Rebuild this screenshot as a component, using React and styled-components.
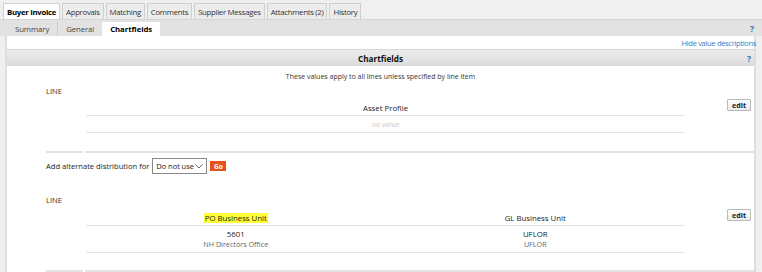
import React from "react";
import styled, { createGlobalStyle } from "styled-components";

const GlobalStyle = createGlobalStyle`
  body {
    margin: 0;
    background: #f0f0f0;
    font-family: "Open Sans", "Noto Sans", sans-serif;
    color: #222;
  }
`;

const topTabs = [
  "Buyer Invoice",
  "Approvals",
  "Matching",
  "Comments",
  "Supplier Messages",
  "Attachments (2)",
  "History",
];

const subTabs = ["Summary", "General", "Chartfields"];

const Page = styled.div`
  width: 762px;
  height: 272px;
  overflow: hidden;
  padding-top: 3px;
  box-sizing: border-box;
`;

const TabBar = styled.div`
  display: flex;
  gap: 2px;
  padding-left: 3px;
  height: 16px;
`;

const Tab = styled.div`
  display: flex;
  align-items: center;
  padding: 0 3px;
  font-size: 7.8px;
  letter-spacing: -0.3px;
  font-weight: ${(p) => (p.$active ? 700 : 400)};
  background: ${(p) => (p.$active ? "#fff" : "#ececec")};
  border: 1px solid #cfcfcf;
  border-bottom: none;
  color: ${(p) => (p.$active ? "#000" : "#333")};
`;

const SubBar = styled.div`
  display: flex;
  align-items: flex-end;
  height: 17px;
  background: #e2e2e2;
  border-top: 1px solid #d4d4d4;
  padding-left: 7px;
  box-sizing: border-box;
`;

const SubTab = styled.div`
  display: flex;
  align-items: center;
  height: 14px;
  padding: 0 8px;
  font-size: 7.8px;
  letter-spacing: -0.1px;
  font-weight: ${(p) => (p.$active ? 700 : 400)};
  background: ${(p) => (p.$active ? "#fff" : "transparent")};
  color: ${(p) => (p.$active ? "#000" : "#444")};
  border-right: ${(p) => (p.$sep ? "1px solid #cfcfcf" : "none")};
`;

const Help = styled.span`
  margin-left: auto;
  margin-right: 8px;
  align-self: center;
  color: #2a6fbd;
  font-weight: 700;
  font-size: 8.5px;
`;

const Content = styled.div`
  margin: 0 6px 0 5px;
  background: #fff;
  border-left: 2px solid #dedede;
  border-right: 2px solid #dedede;
  height: 240px;
`;

const LinkRow = styled.div`
  height: 14px;
  display: flex;
  justify-content: flex-end;
  align-items: flex-end;
  padding-bottom: 1px;
  box-sizing: border-box;
  border-bottom: 1px solid #d6d6d6;
`;

const Link = styled.a`
  color: #3a7dc9;
  font-size: 7.6px;
  letter-spacing: -0.35px;
  text-decoration: none;
  margin-right: -2px;
`;

const PanelHeader = styled.div`
  position: relative;
  height: 16px;
  display: flex;
  align-items: center;
  justify-content: center;
  background: linear-gradient(#ededed, #dadada);
  font-size: 8.2px;
  font-weight: 700;
  color: #111;
`;

const HeaderHelp = styled.span`
  position: absolute;
  right: 3px;
  color: #2a6fbd;
  font-weight: 700;
  font-size: 8.5px;
`;

const Note = styled.div`
  text-align: center;
  font-size: 7px;
  color: #333;
  padding-top: 6px;
  height: 12px;
`;

const Section = styled.div`
  padding-left: 39px;
`;

const LineLabel = styled.div`
  font-size: 7.6px;
  color: #333;
  height: ${(p) => p.$h}px;
  margin-top: ${(p) => p.$mt || 0}px;
  line-height: 11px;
`;

const Row = styled.div`
  display: flex;
  align-items: flex-start;
`;

const Grid = styled.div`
  margin-left: 40px;
  width: 599px;
  display: grid;
  grid-template-columns: repeat(${(p) => p.$cols}, 1fr);
`;

const HeadCell = styled.div`
  height: 15px;
  display: flex;
  align-items: center;
  justify-content: center;
  font-size: 7.8px;
  color: #222;
  border-bottom: 1px solid #dfe5ec;
`;

const Mark = styled.span`
  background: #ffff33;
  padding: 0 1px;
`;

const ValueCell = styled.div`
  height: ${(p) => p.$h}px;
  display: flex;
  flex-direction: column;
  align-items: center;
  justify-content: center;
  border-bottom: 1px solid #dfe5ec;
`;

const Value = styled.div`
  font-size: 7.8px;
  color: #222;
  line-height: 10px;
`;

const Desc = styled.div`
  font-size: 7.2px;
  color: #666;
  line-height: 10px;
`;

const Empty = styled.div`
  font-size: 7.4px;
  font-style: italic;
  color: #c9c9c9;
`;

const EditButton = styled.button`
  margin-left: auto;
  margin-right: 3px;
  margin-top: -1px;
  width: 24px;
  height: 12px;
  padding: 0;
  font-family: inherit;
  font-size: 7.2px;
  font-weight: 700;
  color: #222;
  background: linear-gradient(#fdfdfd, #ececec);
  border: 1px solid #b9b9b9;
  border-radius: 1px;
`;

const Divider = styled.div`
  display: flex;
  gap: 2px;
  margin-top: ${(p) => p.$top}px;
  & > span {
    height: 2px;
    background: #e3e3e3;
  }
  & > span:first-child {
    width: 37px;
  }
  & > span:last-child {
    flex: 1;
  }
`;

const AltRow = styled.div`
  display: flex;
  align-items: center;
  gap: 3px;
  height: 16px;
  margin-top: 5px;
  font-size: 7.6px;
  color: #222;
  white-space: nowrap;
`;

const Select = styled.div`
  display: flex;
  align-items: center;
  justify-content: space-between;
  width: 55px;
  height: 16px;
  box-sizing: border-box;
  border: 1px solid #8a8a8a;
  padding: 0 3px 0 3px;
  font-size: 7.6px;
  letter-spacing: -0.1px;
  background: #fff;
`;

const GoButton = styled.div`
  width: 16px;
  height: 10px;
  display: flex;
  align-items: center;
  justify-content: center;
  background: #e6501c;
  color: #fff;
  font-size: 6.6px;
  font-weight: 700;
`;

export default function App() {
  return (
    <Page>
      <GlobalStyle />
      <TabBar>
        {topTabs.map((t, i) => (
          <Tab key={t} $active={i === 0}>
            {t}
          </Tab>
        ))}
      </TabBar>
      <SubBar>
        {subTabs.map((t, i) => (
          <SubTab key={t} $active={i === 2} $sep={i === 0}>
            {t}
          </SubTab>
        ))}
        <Help>?</Help>
      </SubBar>
      <Content>
        <LinkRow>
          <Link>Hide value descriptions</Link>
        </LinkRow>
        <PanelHeader>
          Chartfields
          <HeaderHelp>?</HeaderHelp>
        </PanelHeader>
        <Note>These values apply to all lines unless specified by line item</Note>
        <Section>
          <LineLabel $h={14} $mt={2}>LINE</LineLabel>
          <Row>
            <Grid $cols={1}>
              <HeadCell>Asset Profile</HeadCell>
              <ValueCell $h={16}>
                <Empty>no value</Empty>
              </ValueCell>
            </Grid>
            <EditButton>edit</EditButton>
          </Row>
          <Divider $top={18}>
            <span />
            <span />
          </Divider>
          <AltRow>
            Add alternate distribution for
            <Select>
              Do not use
              <svg width="8" height="5" viewBox="0 0 8 5">
                <path d="M0.5 0.5 L4 4 L7.5 0.5" fill="none" stroke="#555" strokeWidth="0.9" />
              </svg>
            </Select>
            <GoButton>Go</GoButton>
          </AltRow>
          <LineLabel $h={15} $mt={21}>
            LINE
          </LineLabel>
          <Row>
            <Grid $cols={2}>
              <HeadCell>
                <Mark>PO Business Unit</Mark>
              </HeadCell>
              <HeadCell>GL Business Unit</HeadCell>
              <ValueCell $h={26}>
                <Value>5601</Value>
                <Desc>NH Directors Office</Desc>
              </ValueCell>
              <ValueCell $h={26}>
                <Value>UFLOR</Value>
                <Desc>UFLOR</Desc>
              </ValueCell>
            </Grid>
            <EditButton>edit</EditButton>
          </Row>
          <Divider $top={17}>
            <span />
            <span />
          </Divider>
        </Section>
      </Content>
    </Page>
  );
}
